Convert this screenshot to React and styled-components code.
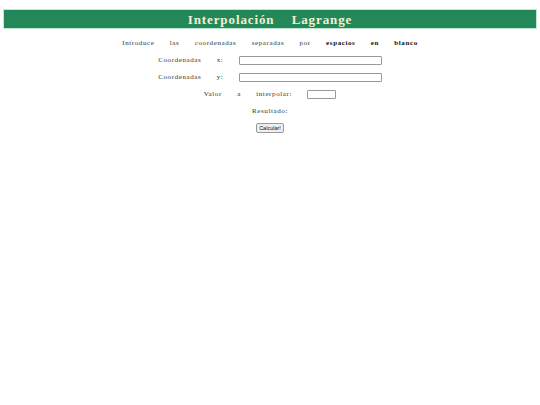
import styled, { createGlobalStyle } from 'styled-components'

const Global = createGlobalStyle`
body {
  margin: 0;
  background: #fff;
  font-family: "Liberation Serif", "Times New Roman", serif;
}
`
const Page = styled.div`
padding: 9px 3px 0;
`
const Cabecera = styled.h1`
margin: 0;
height: 18px;
line-height: 19px;
background-color: #23875a;
border: 1px solid #bfe8d2;
color: #f3f0d2;
text-align: center;
font-size: 13px;
font-weight: bold;
letter-spacing: 0.9px;
word-spacing: 13px;
`
const Cuerpo = styled.div`
padding-top: 9px;
display: flex;
flex-direction: column;
align-items: center;
gap: 7px;
font-size: 7px;
letter-spacing: 0.6px;
word-spacing: 13px;
color: #333;
`
const Linea = styled.div`
height: 10px;
line-height: 10px;
display: flex;
align-items: center;
white-space: pre;
`
const Negrita = styled.b`
color: #111;
`
const Campo = styled.input`
box-sizing: border-box;
width: ${p => p.$ancho}px;
height: 9px;
margin: 0;
padding: 0;
border: 1px solid #999;
border-radius: 1px;
`
const Boton = styled.button`
font-family: "Liberation Sans", Arial, sans-serif;
font-size: 5.5px;
letter-spacing: 0;
word-spacing: 0;
height: 10px;
padding: 0 2px;
border: 1px solid #999;
border-radius: 2px;
background: #efefef;
color: #111;
`

export default function App() {
  return (
    <Page>
      <Global />
      <Cabecera>Interpolación Lagrange</Cabecera>
      <Cuerpo>
        <Linea>Introduce las coordenadas separadas por <Negrita>espacios en blanco</Negrita></Linea>
        <Linea>Coordenadas x: <Campo $ancho={143} /></Linea>
        <Linea>Coordenadas y: <Campo $ancho={143} /></Linea>
        <Linea>Valor a interpolar: <Campo $ancho={29} /></Linea>
        <Linea>Resultado:</Linea>
        <Linea><Boton>Calcular!</Boton></Linea>
      </Cuerpo>
    </Page>
  )
}
